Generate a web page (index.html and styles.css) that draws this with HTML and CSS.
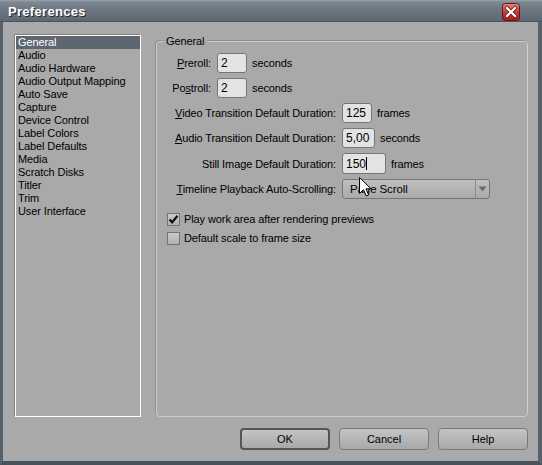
FILE: index.html
```html
<!DOCTYPE html>
<html>
<head>
<meta charset="utf-8">
<title>Preferences</title>
<link rel="stylesheet" href="styles.css">
</head>
<body>
<div class="window">
  <div class="titlebar">
    <span class="title">Preferences</span>
    <span class="close">
      <svg width="18" height="18" viewBox="0 0 18 18">
        <defs>
          <linearGradient id="cg" x1="0" y1="0" x2="0" y2="1">
            <stop offset="0" stop-color="#e58a8a"/>
            <stop offset="0.5" stop-color="#c83c3c"/>
            <stop offset="1" stop-color="#a51f1f"/>
          </linearGradient>
        </defs>
        <rect x="0.5" y="0.5" width="17" height="17" rx="3" fill="url(#cg)" stroke="#6e1414"/>
        <path d="M5 5 L13 13 M13 5 L5 13" stroke="#7a2020" stroke-width="4" stroke-linecap="square"/>
        <path d="M5 5 L13 13 M13 5 L5 13" stroke="#ffffff" stroke-width="2.2" stroke-linecap="square"/>
      </svg>
    </span>
  </div>
  <div class="frame">
    <div class="main">
      <ul class="list">
        <li class="sel">General</li>
        <li>Audio</li>
        <li>Audio Hardware</li>
        <li>Audio Output Mapping</li>
        <li>Auto Save</li>
        <li>Capture</li>
        <li>Device Control</li>
        <li>Label Colors</li>
        <li>Label Defaults</li>
        <li>Media</li>
        <li>Scratch Disks</li>
        <li>Titler</li>
        <li>Trim</li>
        <li>User Interface</li>
      </ul>
      <fieldset class="group">
        <legend>General</legend>
        <div class="rows short">
          <div class="row"><label><u>P</u>reroll:</label><span class="field w30">2</span><span class="unit">seconds</span></div>
          <div class="row"><label>Po<u>s</u>troll:</label><span class="field w30">2</span><span class="unit">seconds</span></div>
        </div>
        <div class="rows long">
          <div class="row"><label><u>V</u>ideo Transition Default Duration:</label><span class="field w30">125</span><span class="unit">frames</span></div>
          <div class="row"><label><u>A</u>udio Transition Default Duration:</label><span class="field w33">5,00</span><span class="unit">seconds</span></div>
          <div class="row still"><label>Still Image Default Duration:</label><span class="field w44">150<span class="caret"></span></span><span class="unit">frames</span></div>
          <div class="row timeline"><label><u>T</u>imeline Playback Auto-Scrolling:</label>
            <span class="select"><span class="select-text">Page Scroll</span><span class="select-arrow"><svg width="9" height="6" viewBox="0 0 9 6"><path d="M0.5 0.5 H8.5 L4.5 5.5 Z" fill="#6a6a6a"/></svg></span></span>
          </div>
        </div>
        <div class="checks">
          <div class="check"><span class="box"><svg width="11" height="11" viewBox="0 0 11 11"><path d="M1.5 5.5 L4.2 8.3 L9.5 1.8" fill="none" stroke="#111" stroke-width="2.2"/></svg></span><span>Play work area after rendering previews</span></div>
          <div class="check"><span class="box"></span><span>Default scale to frame size</span></div>
        </div>
        <svg class="cursor" width="13" height="20" viewBox="0 0 13 20">
          <path d="M0.5 0.5 L0.5 16.5 L4.5 12.7 L7.3 19 L9.6 18 L6.9 11.8 L12 11.8 Z" fill="#fff" stroke="#000" stroke-width="1" stroke-linejoin="miter"/>
        </svg>
      </fieldset>
    </div>
    <div class="buttons">
      <button class="btn default">OK</button>
      <button class="btn">Cancel</button>
      <button class="btn">Help</button>
    </div>
  </div>
</div>
</body>
</html>
```
FILE: styles.css
```css
* { box-sizing: border-box; }
html, body { margin: 0; padding: 0; }
body {
  width: 542px;
  height: 465px;
  overflow: hidden;
  background: #5a6570;
  font-family: "Liberation Sans", Arial, sans-serif;
  font-size: 11px;
  color: #000;
}
.window {
  width: 542px;
  height: 465px;
  display: flex;
  flex-direction: column;
  background: #56616c;
}
.titlebar {
  height: 22px;
  flex: none;
  display: flex;
  align-items: center;
  justify-content: space-between;
  padding: 1px 22px 0 8px;
  background: linear-gradient(#9aa4ae 0, #7d8893 2px, #6c7782 45%, #5d6873 100%);
  border-bottom: 1px solid #4a545e;
}
.title {
  color: #fff;
  font-weight: bold;
  font-size: 13px;
  letter-spacing: 0.3px;
  text-shadow: 1px 1px 0 #262b31;
}
.close { display: flex; height: 18px; margin-top: 1px; }
.frame {
  flex: 1;
  background: #a9a9a9;
  border-left: 3px solid #56616c;
  border-right: 4px solid #56616c;
  border-bottom: 4px solid #48525c;
  padding: 13px 10px 11px 12px;
  display: flex;
  flex-direction: column;
}
.main {
  height: 382px;
  display: flex;
  gap: 15px;
  letter-spacing: -0.1px;
}
.list {
  width: 126px;
  margin: 0;
  padding: 0;
  list-style: none;
  border: 1px solid #ffffff;
  box-shadow: -1px -1px 0 #7f7f7f;
}
.list li {
  height: 13px;
  line-height: 13px;
  padding-left: 2px;
  white-space: nowrap;
}
.list li.sel {
  background: #5d6671;
  color: #fff;
}
.group {
  flex: 1;
  min-width: 0;
  margin: 0;
  padding: 5px 0 0 0;
  border: 1px solid #cdcdcd;
  border-radius: 4px;
  box-shadow: -1px -1px 0 #8e8e8e;
  position: relative;
}
.group legend {
  margin-left: 6px;
  padding: 0 3px;
  line-height: 13px;
  background: #a9a9a9;
}
.row {
  display: flex;
  align-items: center;
  height: 20px;
  margin-bottom: 5px;
  white-space: nowrap;
}
.short label { width: 54px; text-align: right; margin-right: 6px; }
.long label { width: 179px; text-align: right; margin-right: 6px; }
.row.still { height: 21px; margin-top: 1px; }
.row.timeline { margin-top: 3px; }
.field {
  height: 100%;
  border: 1px solid #767676;
  border-radius: 3px;
  background: #e3e3e3;
  padding: 0 3px;
  font-size: 12px;
  letter-spacing: 0;
  line-height: 18px;
  display: flex;
  align-items: center;
}
.w30 { width: 30px; }
.w33 { width: 33px; }
.w44 { width: 44px; }
.caret {
  display: inline-block;
  width: 1px;
  height: 13px;
  background: #000;
}
.unit { margin-left: 5px; }
.select {
  width: 148px;
  height: 20px;
  border: 1px solid #777;
  border-radius: 3px;
  background: linear-gradient(#c0c0c0, #a9a9a9);
  display: flex;
  align-items: center;
  font-size: 11.5px;
}
.select-text { flex: 1; padding-left: 7px; }
.select-arrow {
  width: 14px;
  height: 100%;
  border-left: 1px solid #8a8a8a;
  display: flex;
  align-items: center;
  justify-content: center;
}
.checks { margin-top: 11px; padding-left: 10px; }
.check {
  display: flex;
  align-items: center;
  height: 18px;
  gap: 4px;
}
.check + .check { margin-top: 1px; }
.box {
  width: 13px;
  height: 13px;
  border: 1px solid #737373;
  background: linear-gradient(#c9c9c9, #b0b0b0);
  display: flex;
  align-items: center;
  justify-content: center;
}
.cursor {
  position: absolute;
  left: 202px;
  top: 129px;
}
.buttons {
  margin-top: 11px;
  display: flex;
  justify-content: flex-end;
  gap: 9px;
}
.btn {
  width: 90px;
  height: 22px;
  margin: 0;
  padding: 0;
  border: 1px solid #7a7a7a;
  border-radius: 4px;
  background: linear-gradient(#c4c4c4, #a8a8a8);
  font-family: "Liberation Sans", Arial, sans-serif;
  font-size: 11px;
  color: #000;
}
.btn.default { border: 2px solid #555; }
```
